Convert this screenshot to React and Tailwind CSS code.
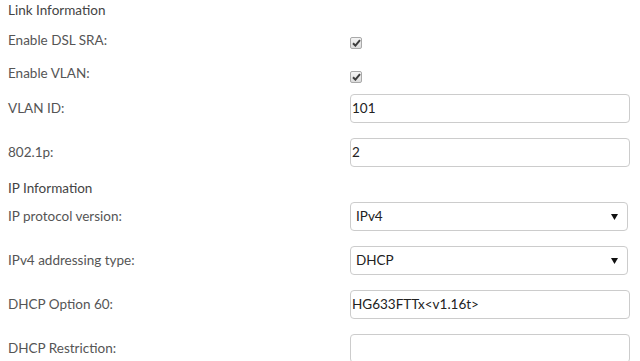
const Check = ({ className }) => (
  <span
    className={`flex h-[12px] w-[12px] items-center justify-center rounded-[2px] border border-[#a9a9a9] bg-gradient-to-b from-[#f4f4f4] to-[#dcdcdc] ${className}`}
  >
    <svg width="9" height="8" viewBox="0 0 9 8">
      <path d="M1 4.2 L3.4 6.6 L8 1.2" fill="none" stroke="#3c3c3c" strokeWidth="2" />
    </svg>
  </span>
);

const TextBox = ({ value, className = "" }) => (
  <div
    className={`flex h-[29px] w-[280px] items-center rounded-[4px] border border-[#cccccc] bg-white pl-[1px] text-[13.5px] text-[#222] ${className}`}
  >
    {value}
  </div>
);

const SelectBox = ({ value, className = "" }) => (
  <div
    className={`flex h-[29px] w-[278px] items-center justify-between rounded-[4px] border border-[#cccccc] bg-white pl-[5px] pr-[9px] text-[13.5px] text-[#222] ${className}`}
  >
    <span>{value}</span>
    <svg width="7" height="6" viewBox="0 0 7 6">
      <path d="M0 0 H7 L3.5 6 Z" fill="#111" />
    </svg>
  </div>
);

const Label = ({ children }) => (
  <div className="w-[350px] pl-[8px] text-[13.5px] text-[#555]">{children}</div>
);

export default function App() {
  return (
    <div
      className="h-[361px] w-[640px] overflow-hidden bg-white"
      style={{ fontFamily: "Lato, 'Open Sans', sans-serif" }}
    >
      <div className="flex h-[21px] items-center pl-[8px] text-[13.5px] text-[#444]">Link Information</div>

      <div className="flex h-[38px] items-center">
        <Label>Enable DSL SRA:</Label>
        <Check className="mt-[6px]" />
      </div>

      <div className="flex h-[28px] items-center">
        <Label>Enable VLAN:</Label>
        <Check className="mt-[8px]" />
      </div>

      <div className="mt-[7px] flex items-center">
        <Label>VLAN ID:</Label>
        <TextBox value="101" />
      </div>

      <div className="mt-[15px] flex items-center">
        <Label>802.1p:</Label>
        <TextBox value="2" />
      </div>

      <div className="mt-[11px] flex h-[21px] items-center pl-[8px] text-[13.5px] text-[#444]">IP Information</div>

      <div className="mt-[3px] flex items-center">
        <Label>IP protocol version:</Label>
        <SelectBox value="IPv4" />
      </div>

      <div className="mt-[15px] flex items-center">
        <Label>IPv4 addressing type:</Label>
        <SelectBox value="DHCP" />
      </div>

      <div className="mt-[15px] flex items-center">
        <Label>DHCP Option 60:</Label>
        <TextBox value="HG633FTTx<v1.16t>" />
      </div>

      <div className="mt-[15px] flex items-center">
        <Label>DHCP Restriction:</Label>
        <TextBox value="" />
      </div>
    </div>
  );
}
